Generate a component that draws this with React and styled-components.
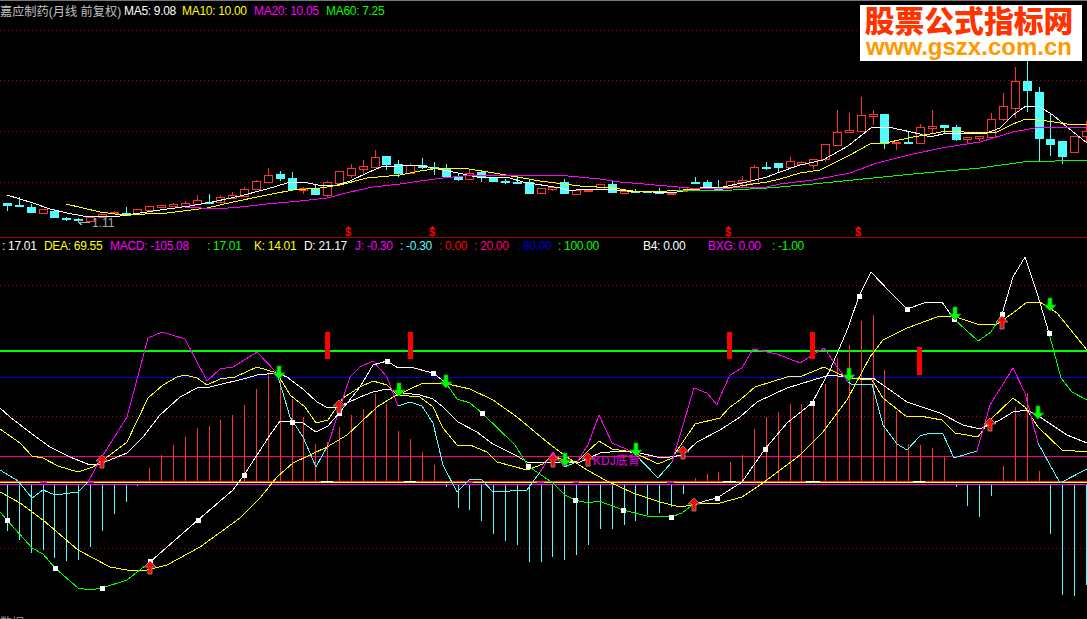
import React from 'react';
import styled, { createGlobalStyle } from 'styled-components';

const GlobalStyle = createGlobalStyle`
  html, body {
    margin: 0;
    padding: 0;
    background: #000;
  }
`;

const RED = '#ff3232';
const CYAN = '#54fcfc';
const YELLOW = '#ffff00';
const MAGENTA = '#ff00ff';
const GREEN = '#00ff00';
const WHITE = '#ffffff';
const FONT = '"Liberation Sans", "Noto Sans CJK SC", sans-serif';

const Screen = styled.div`
  width: 1087px;
  height: 619px;
  background: #000;
  border-top: 1px solid #777;
  box-sizing: border-box;
  overflow: hidden;
  position: relative;
  font-family: ${FONT};
`;

const PricePane = styled.section`
  border-bottom: 1px solid #a00000;
`;

const Legend = styled.div`
  display: flex;
  align-items: center;
  height: ${(p) => p.$h}px;
  padding-left: ${(p) => p.$pad || 0}px;
  font-size: 12px;
  letter-spacing: -0.3px;
  white-space: nowrap;
  overflow: hidden;
`;

const LegendItem = styled.span`
  color: ${(p) => p.$color};
  width: ${(p) => p.$w}px;
  flex: none;
`;

const Title = styled.span`
  color: #c0c0c0;
  font-size: 12.2px;
  letter-spacing: 0;
  width: 124px;
  flex: none;
`;

const Chart = styled.svg`
  display: block;
  width: 1087px;
  height: ${(p) => p.$h}px;
  overflow: visible;
  shape-rendering: crispEdges;
  text {
    font-family: ${FONT};
  }
`;

const Logo = styled.div`
  position: absolute;
  top: 4px;
  left: 860px;
  width: 222px;
  height: 56px;
  padding-right: 4px;
  box-sizing: border-box;
  background: #fff;
  display: flex;
  flex-direction: column;
  align-items: center;
`;

const LogoTitle = styled.div`
  color: #ff3300;
  font-family: "Noto Sans CJK SC", sans-serif;
  font-weight: 900;
  font-size: 29.8px;
  line-height: 29px;
  white-space: nowrap;
`;

const LogoUrl = styled.div`
  color: #ff9900;
  font-family: "Liberation Sans", sans-serif;
  font-weight: 700;
  font-size: 24px;
  line-height: 25px;
  white-space: nowrap;
`;

const Footer = styled.div`
  color: #999;
  font-size: 12px;
  line-height: 14px;
`;

const priceLegend = [
  { t: 'MA5: 9.08', c: WHITE, w: 58 },
  { t: 'MA10: 10.00', c: YELLOW, w: 72 },
  { t: 'MA20: 10.05', c: MAGENTA, w: 72 },
  { t: 'MA60: 7.25', c: GREEN, w: 62 },
];

const indicatorLegend = [
  { t: ': 17.01', c: WHITE, w: 42 },
  { t: 'DEA: 69.55', c: YELLOW, w: 66 },
  { t: 'MACD: -105.08', c: MAGENTA, w: 97 },
  { t: ': 17.01', c: GREEN, w: 47 },
  { t: 'K: 14.01', c: YELLOW, w: 50 },
  { t: 'D: 21.17', c: WHITE, w: 51 },
  { t: 'J: -0.30', c: MAGENTA, w: 45 },
  { t: ': -0.30', c: CYAN, w: 39 },
  { t: ': 0.00', c: '#ff0000', w: 35 },
  { t: ': 20.00', c: '#ff0080', w: 43 },
  { t: ': 80.00', c: '#0000d0', w: 41 },
  { t: ': 100.00', c: GREEN, w: 85 },
  { t: 'B4: 0.00', c: WHITE, w: 65 },
  { t: 'BXG: 0.00', c: MAGENTA, w: 64 },
  { t: ': -1.00', c: GREEN, w: 40 },
];

// top, bottom, wick top, wick bottom, colour
const candles = [
  [203,205,203,211,'c'],[205,206,197,207,'c'],[207,212,204,213,'c'],[209,213,209,213,'r'],[211,217,209,217,'c'],
  [218,219,217,221,'c'],[219,220,218,221,'c'],[217,221,217,221,'r'],[214,217,214,217,'r'],[212,213,211,214,'r'],
  [213,215,207,216,'c'],[209,214,209,214,'r'],[206,210,206,210,'r'],[205,207,205,207,'r'],[204,206,203,207,'r'],
  [203,206,201,206,'r'],[200,204,195,204,'r'],[202,203,194,204,'c'],[197,202,195,202,'r'],[195,198,192,199,'r'],
  [189,196,187,196,'r'],[181,189,180,189,'r'],[175,182,168,183,'r'],[174,178,171,181,'c'],[178,189,172,189,'c'],
  [188,190,187,194,'r'],[189,194,184,194,'c'],[182,195,181,197,'r'],[171,183,171,183,'r'],[168,175,164,178,'r'],
  [166,169,160,174,'r'],[157,167,150,167,'r'],[156,164,156,170,'c'],[164,173,160,177,'c'],[165,173,163,173,'r'],
  [165,167,158,169,'c'],[167,168,162,175,'c'],[169,176,164,176,'c'],[177,179,173,181,'c'],[173,179,170,179,'r'],
  [172,177,172,182,'c'],[177,181,177,181,'c'],[181,182,179,184,'c'],[182,183,176,183,'c'],[182,193,180,194,'c'],
  [188,193,188,194,'r'],[187,189,187,191,'r'],[182,193,179,193,'c'],[190,194,190,194,'r'],[190,191,190,192,'r'],
  [184,189,184,189,'r'],[184,192,181,192,'c'],[191,193,191,193,'r'],[191,192,189,193,'c'],[191,192,191,193,'c'],
  [192,193,188,193,'c'],[193,194,193,195,'r'],[187,191,187,191,'r'],[182,183,177,184,'c'],[182,186,180,187,'c'],
  [187,189,180,189,'c'],[181,187,181,187,'r'],[180,182,176,187,'r'],[167,183,165,183,'r'],[167,168,162,170,'c'],
  [163,167,163,173,'c'],[161,167,157,167,'r'],[162,164,161,165,'r'],[159,165,159,169,'r'],[144,159,144,162,'r'],
  [132,145,110,145,'r'],[130,132,113,133,'r'],[115,131,97,131,'r'],[114,116,110,125,'r'],[114,143,114,149,'c'],
  [142,143,142,150,'r'],[142,143,131,143,'c'],[127,143,124,143,'r'],[126,128,110,133,'r'],[125,127,125,133,'c'],
  [127,139,125,141,'c'],[137,139,137,143,'r'],[136,138,136,141,'r'],[119,137,113,137,'r'],[106,119,93,121,'r'],
  [81,108,67,118,'r'],[81,90,60,112,'c'],[92,138,87,162,'c'],[139,144,113,156,'c'],[141,156,141,164,'c'],
  [136,152,136,153,'r'],[131,136,121,142,'r'],
];

const maLines = [
  { c: WHITE, p: '7,195 20,199 33,203 50,209 67,213 83,216 100,217 120,216 140,213 167,209 190,206 217,201 240,196 267,189 287,183 303,182 323,186 337,185 350,181 367,173 383,166 400,166 417,165 433,168 453,172 477,177 510,178 523,182 560,188 570,191 582,189 607,189 627,191 653,192 677,192 700,188 723,187 747,182 767,177 780,172 800,165 823,160 848,146 872,127 888,127 902,130 920,134 930,137 947,133 973,133 987,133 1000,128 1013,115 1026,106 1040,107 1053,115 1067,127 1087,143' },
  { c: YELLOW, p: '66,204 100,212 123,215 167,213 207,208 233,202 267,195 293,190 320,188 340,185 367,178 400,175 420,171 440,168 463,168 500,174 540,181 580,186 613,188 633,191 667,191 700,189 733,187 767,182 780,179 800,173 820,170 850,155 870,144 890,142 913,137 930,134 947,131 980,133 997,132 1013,124 1026,119 1047,121 1067,124 1087,124' },
  { c: MAGENTA, p: '185,207 217,209 240,207 267,204 300,201 327,198 350,192 373,187 400,184 420,181 443,178 473,175 557,175 600,179 620,182 667,186 700,189 733,188 767,187 780,184 813,180 850,173 877,163 913,154 947,147 980,142 1013,132 1040,127 1087,127' },
  { c: GREEN, p: '677,191 733,190 767,188 780,187 813,184 853,180 913,174 980,168 1023,162 1087,160' },
];

const markers = [348, 432, 728, 858];

const macd = [
  531,540,553,550,558,561,560,547,531,514,502,486,468,455,445,437,428,426,420,415,405,389,373,373,399,417,444,442,427,415,
  409,394,404,431,439,452,465,487,508,510,521,534,541,545,562,562,557,560,555,545,529,529,525,521,515,513,507,494,478,474,
  472,462,455,429,417,412,404,404,403,384,358,345,321,315,370,411,444,445,448,457,487,506,517,496,466,407,393,471,534,595,
  596,585,
];

const indicatorLines = [
  // slow white line
  { c: WHITE, p: '0,408 10,417 32,434 50,447 70,457 90,465 100,464 127,453 143,437 160,415 180,397 197,388 210,387 247,378 257,375 277,373 287,377 303,389 317,402 328,408 337,407 347,403 360,397 373,392 387,389 403,393 420,395 433,399 443,407 458,422 477,432 493,444 517,456 527,462 543,463 560,462 580,462 600,453 620,451 640,453 657,457 670,457 683,455 697,442 720,430 740,417 757,402 787,388 813,380 830,375 853,378 873,378 907,402 940,413 963,425 980,429 1000,420 1013,412 1027,410 1040,417 1067,435 1087,443' },
  // yellow, upper
  { c: YELLOW, p: '0,429 20,443 32,456 43,458 58,466 78,472 93,467 110,455 127,442 148,398 163,385 177,377 185,375 197,378 207,385 220,379 235,377 257,367 277,373 290,395 305,407 316,423 328,420 343,398 360,387 373,381 387,385 397,395 420,397 433,407 443,428 457,445 470,445 487,452 497,462 527,470 543,464 552,455 563,460 577,462 587,452 599,441 612,449 633,452 658,464 672,458 695,424 720,418 730,407 740,400 755,387 787,377 802,376 824,367 848,378 872,380 883,398 907,417 920,416 942,420 955,433 978,437 990,420 1013,398 1025,407 1038,427 1062,450 1087,452' },
  // fast line, magenta above the middle and cyan below it
  { c: CYAN, p: '0,470 18,481 32,498 43,490 55,495 78,492 88,482' },
  { c: MAGENTA, p: '88,482 100,460 127,417 148,338 162,332 185,339 207,381 220,369 233,367 257,352 277,373' },
  { c: CYAN, p: '277,373 290,417 303,437 316,467 328,445' },
  { c: MAGENTA, p: '328,445 350,377 360,367 373,361 387,377 398,406' },
  { c: CYAN, p: '398,406 410,402 422,406 433,423 443,465 457,492 470,479 482,480 493,492 527,490 540,472' },
  { c: MAGENTA, p: '540,472 553,452 564,467' },
  { c: CYAN, p: '564,467 577,462' },
  { c: MAGENTA, p: '577,462 588,445 599,415 612,443 633,452' },
  { c: CYAN, p: '633,452 658,478 672,462' },
  { c: MAGENTA, p: '672,462 694,388 707,393 717,405 720,397 730,375 742,368 753,349 777,354 800,363 824,348 848,382' },
  { c: CYAN, p: '848,382 852,385 872,384 883,425 897,444 907,450 920,436 930,433 943,434 954,458 977,451' },
  { c: MAGENTA, p: '977,451 990,405 1013,368 1025,393 1038,443' },
  { c: CYAN, p: '1038,443 1060,483 1087,469' },
  // lower yellow line
  { c: YELLOW, p: '0,492 20,503 43,520 78,550 110,567 127,570 147,570 167,565 200,547 240,518 260,498 277,477 293,463 327,447 347,435 360,423 377,407 393,397 423,383 443,383 470,389 493,400 517,417 547,442 567,457 587,470 607,481 633,493 660,502 680,507 703,503 720,503 742,497 763,483 800,455 823,432 847,400 870,357 883,340 907,328 937,317 953,316 977,324 997,324 1013,313 1027,302 1040,302 1057,313 1087,350' },
  // lower line, white while rising and green while falling
  { c: GREEN, p: '0,512 7,520 32,548 43,554 55,568 78,588 90,590 102,588 127,580 150,562' },
  { c: WHITE, p: '150,562 198,520 233,490 244,475 270,435 280,421 292,422 303,423 316,432 328,426 340,412 360,387 373,365 387,361 398,368 410,367 433,373 446,383' },
  { c: GREEN, p: '446,383 457,399 470,403 482,413 515,445 528,466 553,483 565,495 575,500 588,503 599,501 623,510 647,516 671,517 682,513 694,504' },
  { c: WHITE, p: '694,504 717,498 742,482 765,449 787,423 812,403 830,370 848,328 859,296 871,272 890,292 907,309 927,302 942,302 954,319' },
  { c: GREEN, p: '954,319 978,341 991,332 1002,314' },
  { c: WHITE, p: '1002,314 1013,277 1025,257 1037,293 1049,333' },
  { c: GREEN, p: '1049,333 1061,378 1072,392 1087,400' },
];

const squares = [
  [7,520],[55,568],[102,588],[150,561],[198,520],[244,475],[292,422],[339,413],[387,361],[433,373],[482,413],[528,466],
  [575,500],[623,510],[671,517],[717,498],[765,449],[812,403],[859,296],[907,309],[954,319],[1002,314],[1049,333],
];

const downArrows = [[279,372],[399,389],[446,381],[565,459],[636,449],[849,374],[955,313],[1050,304],[1038,412]];
const upArrows = [[102,462],[150,568],[339,407],[553,461],[588,460],[683,453],[694,505],[1002,323],[990,425]];
const signals = [[327,332,359],[410,332,359],[729,332,359],[812,332,359],[919,347,375]];

const axisWhite = [[321,333],[404,416],[723,736],[806,820],[913,925]];
const axisMagenta = [[40,47],[87,94],[466,473],[537,544],[573,579],[667,674]];

const barX = (i) => Math.round(7 + 11.857 * i) + 0.5;

const Candle = ({ d, x }) => {
  const [top, bottom, wickTop, wickBottom, kind] = d;
  const color = kind === 'r' ? RED : CYAN;
  return (
    <g>
      <line x1={x} x2={x} y1={wickTop} y2={wickBottom} stroke={color} />
      <rect
        x={x - 4}
        y={top + 0.5}
        width={8}
        height={bottom - top}
        stroke={color}
        fill={kind === 'r' ? '#000' : color}
      />
    </g>
  );
};

const Grid = ({ ys }) =>
  ys.map((y) => (
    <line key={y} x1="0" x2="1087" y1={y + 0.5} y2={y + 0.5} stroke="#b00000" strokeDasharray="1 3" />
  ));

const Line = ({ c, p }) => <polyline points={p} fill="none" stroke={c} strokeWidth="1" />;

const Arrow = ({ x, y, up }) => (
  <path
    transform={`translate(${x} ${y})${up ? '' : ' rotate(180)'}`}
    d="M0 -7 L6 -1 L2 -1 L2 6 L-2 6 L-2 -1 L-6 -1 Z"
    fill={up ? '#ff0000' : '#00ff00'}
    stroke={up ? '#999' : '#00a000'}
    strokeWidth="0.8"
    shapeRendering="geometricPrecision"
  />
);

const PriceChart = () => (
  <Chart $h={217} viewBox="0 20 1087 217">
    <Grid ys={[30, 80, 131, 182]} />
    {candles.map((d, i) => (
      <Candle key={i} d={d} x={barX(i)} />
    ))}
    {maLines.map((l) => (
      <Line key={l.c} c={l.c} p={l.p} />
    ))}
    <path d="M78 222 L90 222 M78 222 L82 219 M78 222 L82 225" stroke="#aaa" fill="none" />
    <text x="92" y="227" fontSize="12" fill="#aaa">1.11</text>
    {markers.map((x) => (
      <g key={x}>
        <path d={`M${x} 226 L${x + 3} 229 L${x - 3} 229 Z`} fill="#ff0000" />
        <text x={x} y="236" fontSize="11" fontWeight="700" textAnchor="middle" fill="#ff0000">$</text>
      </g>
    ))}
  </Chart>
);

const IndicatorChart = () => (
  <Chart $h={363} viewBox="0 253 1087 363">
    <Grid ys={[285, 416, 548]} />
    <line x1="0" x2="1087" y1="351" y2="351" stroke={GREEN} strokeWidth="2" />
    <line x1="0" x2="1087" y1="377.5" y2="377.5" stroke="#0000d0" />
    <line x1="0" x2="1087" y1="456.5" y2="456.5" stroke="#ff0080" />
    {macd.map((v, i) => (
      <line
        key={i}
        x1={barX(i)}
        x2={barX(i)}
        y1={v < 482 ? 481 : 484}
        y2={v}
        stroke={v < 482 ? RED : CYAN}
      />
    ))}
    <line x1="0" x2="1087" y1="481.5" y2="481.5" stroke="#ff3232" />
    <line x1="0" x2="1087" y1="482.5" y2="482.5" stroke={YELLOW} />
    <line x1="0" x2="1087" y1="484.5" y2="484.5" stroke={MAGENTA} />
    {axisWhite.map(([a, b]) => (
      <line key={a} x1={a} x2={b} y1="481.5" y2="481.5" stroke={WHITE} />
    ))}
    {axisMagenta.map(([a, b]) => (
      <line key={a} x1={a} x2={b} y1="482.5" y2="482.5" stroke={MAGENTA} />
    ))}
    {indicatorLines.map((l, i) => (
      <Line key={i} c={l.c} p={l.p} />
    ))}
    {squares.map(([x, y]) => (
      <rect key={x} x={x - 2.5} y={y - 2} width="5" height="5" fill={WHITE} />
    ))}
    {signals.map(([x, a, b]) => (
      <rect key={x} x={x - 2.5} y={a} width="5" height={b - a} fill="#ff0000" />
    ))}
    <text x="593" y="465" fontSize="12" fill="#e800e8">KDJ底背</text>
    {downArrows.map(([x, y]) => (
      <Arrow key={x} x={x} y={y} />
    ))}
    {upArrows.map(([x, y]) => (
      <Arrow key={x} x={x} y={y} up />
    ))}
  </Chart>
);

export default function App() {
  return (
    <>
      <GlobalStyle />
      <Screen>
        <PricePane>
          <Legend $h={19}>
            <Title>嘉应制药(月线 前复权)</Title>
            {priceLegend.map((l) => (
              <LegendItem key={l.t} $color={l.c} $w={l.w}>{l.t}</LegendItem>
            ))}
          </Legend>
          <PriceChart />
        </PricePane>
        <Legend $h={15} $pad={2}>
          {indicatorLegend.map((l, i) => (
            <LegendItem key={i} $color={l.c} $w={l.w}>{l.t}</LegendItem>
          ))}
        </Legend>
        <IndicatorChart />
        <Footer>数据</Footer>
        <Logo>
          <LogoTitle>股票公式指标网</LogoTitle>
          <LogoUrl>www.gszx.com.cn</LogoUrl>
        </Logo>
      </Screen>
    </>
  );
}
